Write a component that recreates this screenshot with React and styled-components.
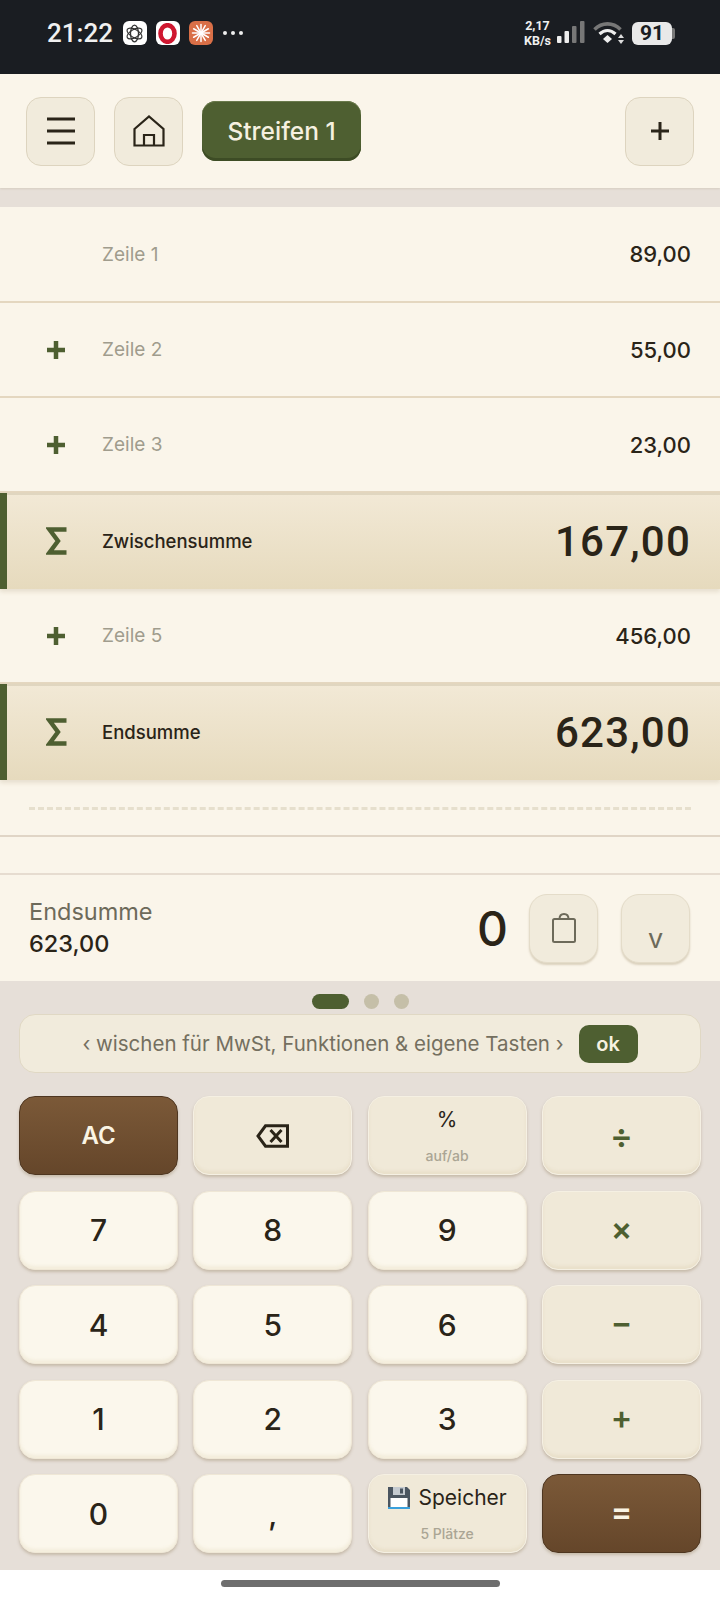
import React from 'react';
import styled, { createGlobalStyle } from 'styled-components';

const GlobalStyle = createGlobalStyle`
  html, body { margin: 0; padding: 0; background: #fff; }
  body { font-family: 'Inter', 'Liberation Sans', sans-serif; }
  * { box-sizing: border-box; }
`;

const Page = styled.div`
  width: 720px;
  height: 1600px;
  display: flex;
  flex-direction: column;
  overflow: hidden;
  background: #fff;
`;

/* status bar */
const StatusBar = styled.div`
  height: 74px;
  flex: none;
  background: #1a1d22;
  display: flex;
  align-items: center;
  padding: 0 45px 8px 47px;
  color: #f0f0f0;
  font-family: 'Roboto', sans-serif;
`;
const Time = styled.span`
  font-size: 26px;
  font-weight: 500;
  margin-right: 10px;
`;
const AppIcon = styled.span`
  width: 24px;
  height: 24px;
  border-radius: 6px;
  background: ${(p) => p.$bg};
  display: flex;
  align-items: center;
  justify-content: center;
  margin-right: 9px;
`;
const MoreDots = styled.span`
  display: flex;
  gap: 4px;
  margin-left: 1px;
  i { width: 4px; height: 4px; border-radius: 50%; background: #eee; }
`;
const StatusRight = styled.div`
  margin-left: auto;
  display: flex;
  align-items: center;
`;
const Speed = styled.span`
  font-size: 12.5px;
  font-weight: 700;
  line-height: 15px;
  text-align: center;
  margin-right: 6px;
`;
const Battery = styled.span`
  width: 40px;
  height: 23px;
  border-radius: 6px;
  background: #e9e9e9;
  color: #1a1d22;
  font-size: 21px;
  font-weight: 700;
  line-height: 23px;
  text-align: center;
  margin-left: 7px;
`;
const BatteryCap = styled.span`
  width: 3px;
  height: 11px;
  background: #777;
  border-radius: 0 2px 2px 0;
`;

/* header */
const Header = styled.div`
  height: 114px;
  flex: none;
  background: #faf5ea;
  display: flex;
  align-items: center;
  padding: 0 26px;
  gap: 19px;
  box-shadow: 0 1px 2px rgba(120, 100, 70, 0.15);
  position: relative;
`;
const IconButton = styled.button`
  width: 69px;
  height: 69px;
  padding: 0;
  display: flex;
  align-items: center;
  justify-content: center;
  border: 1.5px solid #ddd4bf;
  border-radius: 15px;
  background: #f1ebdc;
  color: #2a2418;
  margin-left: ${(p) => (p.$push ? 'auto' : '0')};
`;
const TabPill = styled.div`
  width: 159px;
  height: 60px;
  border-radius: 14px;
  background: #4e5f31;
  box-shadow: inset 0 -3px 0 #3d4c25, inset 0 1px 0 #6a7a4c;
  color: #f6f1e0;
  font-size: 24.5px;
  font-weight: 500;
  display: flex;
  align-items: center;
  justify-content: center;
`;

const Gap = styled.div`
  height: 19px;
  flex: none;
  background: #e6dfd8;
`;

/* rows */
const Row = styled.div`
  height: ${(p) => p.$h}px;
  flex: none;
  display: grid;
  grid-template-columns: 102px 1fr auto;
  align-items: center;
  padding-right: 29px;
  background: #faf5ea;
  border-bottom: 2px solid #e4d7c0;
`;
const SumRow = styled(Row)`
  background: linear-gradient(180deg, #f2e9d6 0%, #e6dabd 100%);
  border-bottom: none;
  box-shadow: inset 7px 0 0 #4e5f31, inset 0 2px 0 #e0d6c0, 0 3px 4px rgba(150, 130, 90, 0.18);
  position: relative;
`;
const Sign = styled.span`
  justify-self: center;
  margin-left: 10px;
  color: #4e5f31;
  display: flex;
`;
const Label = styled.span`
  font-size: ${(p) => (p.$sum ? 18.5 : 19)}px;
  color: ${(p) => (p.$sum ? '#2a2418' : '#a09c8d')};
  font-weight: ${(p) => (p.$sum ? 500 : 400)};
`;
const Value = styled.span`
  font-family: ${(p) => (p.$sum ? "'Roboto', sans-serif" : 'inherit')};
  font-size: ${(p) => (p.$sum ? 42 : 22)}px;
  font-weight: 500;
  color: #2a2418;
  letter-spacing: ${(p) => (p.$sum ? '1.2px' : '0')};
`;
const DashedRow = styled.div`
  height: 57px;
  flex: none;
  background: #faf5ea;
  border-bottom: 2px solid #e0d5c6;
  padding: 27px 29px 0;
`;
const DashedLine = styled.div`
  border-top: 3px dashed #e6dfcd;
`;
const BlankRow = styled.div`
  height: 38px;
  flex: none;
  background: #faf5ea;
  border-bottom: 2px solid #e6dcd0;
`;

/* display */
const Display = styled.div`
  height: 106px;
  flex: none;
  background: #faf5ea;
  display: flex;
  align-items: center;
  padding: 0 30px 0 29px;
`;
const DisplayInfo = styled.div`
  display: flex;
  flex-direction: column;
  gap: 3px;
  margin-right: auto;
  padding-bottom: 2px;
`;
const DisplayName = styled.span`
  font-size: 23.5px;
  color: #6d6a5a;
`;
const DisplayValue = styled.span`
  font-size: 23.5px;
  font-weight: 500;
  color: #2a2418;
`;
const Current = styled.span`
  font-size: 48px;
  font-weight: 500;
  color: #2a2418;
  margin-right: 21px;
`;
const RoundButton = styled.button`
  width: 69px;
  height: 69px;
  padding: 0 0 ${(p) => (p.$low ? '7px' : '0')};
  display: flex;
  align-items: ${(p) => (p.$low ? 'flex-end' : 'center')};
  justify-content: center;
  border: 1.5px solid #e4dcc9;
  border-radius: 18px;
  background: #f1ebdc;
  box-shadow: 0 2px 2px rgba(150, 130, 90, 0.3);
  color: #6d6a5a;
  font: 400 27px 'Inter', sans-serif;
  margin-left: ${(p) => (p.$wide ? '23px' : '0')};
`;

/* keypad */
const Keypad = styled.div`
  height: 589px;
  flex: none;
  background: #e6dfd8;
  padding: 13px 19px 0;
`;
const Dots = styled.div`
  display: flex;
  justify-content: center;
  align-items: center;
  gap: 15px;
  height: 14px;
  margin-bottom: 6px;
`;
const Dot = styled.span`
  width: ${(p) => (p.$active ? 37 : 15)}px;
  height: 15px;
  border-radius: 8px;
  background: ${(p) => (p.$active ? '#4e5f31' : '#c5bfa8')};
`;
const Hint = styled.div`
  height: 59px;
  display: flex;
  align-items: center;
  justify-content: center;
  gap: 15px;
  border: 1.5px solid #e0d8c4;
  border-radius: 16px;
  background: #f1ebdc;
  color: #746f5f;
  font-size: 20.5px;
  margin-bottom: 23px;
`;
const OkBadge = styled.span`
  width: 59px;
  height: 38px;
  display: flex;
  align-items: center;
  justify-content: center;
  border-radius: 10px;
  background: #4e5f31;
  color: #f6f1e0;
  font-size: 20px;
  font-weight: 600;
`;
const KeyGrid = styled.div`
  display: grid;
  grid-template-columns: repeat(4, 159px);
  grid-auto-rows: 79px;
  column-gap: 15.3px;
  row-gap: 15.5px;
`;
const keyThemes = {
  num: 'background: #fbf7ec; color: #2a2418; border: 1.5px solid #efe7d6; box-shadow: inset 0 -3px 3px rgba(225, 210, 175, 0.25), 0 2px 3px rgba(140, 120, 85, 0.35);',
  func: 'background: #f0e9d8; color: #2a2418; border: 1.5px solid #f5f0e3; box-shadow: inset 0 -3px 3px rgba(215, 200, 165, 0.25), 0 2px 3px rgba(140, 120, 85, 0.35);',
  op: 'background: #f0e9d8; color: #4e5f31; font-weight: 600; border: 1.5px solid #f5f0e3; box-shadow: inset 0 -3px 3px rgba(215, 200, 165, 0.25), 0 2px 3px rgba(140, 120, 85, 0.35);',
  main: 'background: linear-gradient(180deg, #7b5938 0%, #65462a 100%); color: #faf4e4; font-weight: 600; border: 1.5px solid #4e3620; box-shadow: 0 2px 3px rgba(140, 120, 85, 0.35);',
};
const Key = styled.button`
  padding: 0 0 ${(p) => (p.$lift ? '4px' : '0')};
  display: flex;
  flex-direction: column;
  align-items: center;
  justify-content: center;
  border-radius: 16px;
  font-family: 'Inter', sans-serif;
  font-size: ${(p) => p.$size || 30}px;
  font-weight: 500;
  ${(p) => keyThemes[p.$kind || 'num']}
`;
const KeyTop = styled.span`
  display: flex;
  align-items: center;
  gap: 7px;
  font-size: 21px;
  font-weight: 400;
  color: #2a2418;
`;
const KeySub = styled.span`
  font-size: 14px;
  font-weight: 500;
  color: #aaa594;
  margin-top: 15px;
`;

/* nav bar */
const NavBar = styled.div`
  flex: 1;
  background: #fff;
  display: flex;
  justify-content: center;
  padding-top: 10px;
`;
const NavHandle = styled.div`
  width: 279px;
  height: 7px;
  border-radius: 4px;
  background: #6e6e6e;
`;

const PlusIcon = ({ size = 18, weight = 3 }) => (
  <svg width={size} height={size} viewBox="0 0 18 18">
    <path d="M9 0v18M0 9h18" stroke="currentColor" strokeWidth={weight} fill="none" />
  </svg>
);

const SigmaIcon = () => (
  <svg width="21" height="28" viewBox="0 0 21 28">
    <path d="M20.500 2.500H3.500l8.500 11.500-8.500 11.500h17" stroke="currentColor" strokeWidth="4.400" fill="none" />
  </svg>
);

const MenuIcon = () => (
  <svg width="28" height="28" viewBox="0 0 28 28">
    <path d="M0 2h28M0 14h28M0 26h28" stroke="currentColor" strokeWidth="3" />
  </svg>
);

const HomeIcon = () => (
  <svg width="32" height="32" viewBox="0 0 32 32" fill="none">
    <path d="M1.500 14L16 1.500 30.500 14v16.500H1.500zM11 30.500V20h10v10.500" stroke="currentColor" strokeWidth="2.200" />
  </svg>
);

const BagIcon = () => (
  <svg width="24" height="30" viewBox="0 0 24 30" fill="none">
    <rect x="1" y="6" width="22" height="23" rx="1.500" stroke="currentColor" strokeWidth="2" />
    <path d="M7.500 6C7.500 2.800 9.300 1 12 1s4.500 1.800 4.500 5" stroke="currentColor" strokeWidth="2" />
  </svg>
);

const BackspaceIcon = () => (
  <svg width="33" height="24" viewBox="0 0 33 24" fill="none">
    <path d="M31.500 1.800H9.500L2 12l7.500 10.200h22zM14.500 6l11 12M25.500 6l-11 12" stroke="currentColor" strokeWidth="3" />
  </svg>
);

const FloppyIcon = () => (
  <svg width="24" height="24" viewBox="0 0 24 24">
    <path d="M1 1h19l3 3v19H1z" fill="#4a5560" />
    <rect x="6" y="1" width="12" height="8" fill="#c4cad0" />
    <rect x="13" y="2.500" width="3" height="5" fill="#4a5560" />
    <rect x="3.500" y="12" width="17" height="9" fill="#fff" />
    <rect x="1" y="21" width="22" height="2" fill="#3aa0dc" />
  </svg>
);

const OpenAiIcon = () => (
  <svg width="19" height="19" viewBox="0 0 24 24" fill="none" stroke="#333" strokeWidth="1.500">
    <ellipse cx="12" cy="12" rx="5" ry="10.500" />
    <ellipse cx="12" cy="12" rx="5" ry="10.500" transform="rotate(60 12 12)" />
    <ellipse cx="12" cy="12" rx="5" ry="10.500" transform="rotate(120 12 12)" />
  </svg>
);

const OperaIcon = () => (
  <svg width="21" height="21" viewBox="0 0 21 21" fill="none">
    <ellipse cx="10.500" cy="10.500" rx="7" ry="8.300" stroke="#cf1730" strokeWidth="4.600" />
  </svg>
);

const BurstIcon = () => (
  <svg width="20" height="20" viewBox="0 0 20 20" stroke="#fff" strokeWidth="1.500" strokeLinecap="round">
    {[0, 30, 60, 90, 120, 150, 180, 210, 240, 270, 300, 330].map((a) => (
      <path key={a} d="M10 10V1.500" transform={`rotate(${a} 10 10)`} />
    ))}
  </svg>
);

const SignalIcon = () => (
  <svg width="28" height="24" viewBox="0 0 28 24">
    <rect x="0" y="15" width="4.500" height="7" rx="1" fill="#eee" />
    <rect x="7.500" y="10" width="4.500" height="12" rx="1" fill="#eee" />
    <rect x="15" y="5" width="4.500" height="17" rx="1" fill="#777" />
    <rect x="23" y="0" width="4.500" height="22" rx="1" fill="#777" />
  </svg>
);

const WifiIcon = () => (
  <svg width="32" height="24" viewBox="0 0 32 24" fill="none" style={{ marginLeft: 8 }}>
    <path d="M1.500 8.500C9 1 20 1 27.500 8.500" stroke="#777" strokeWidth="3.600" />
    <path d="M6.500 13C11.500 8.500 17.500 8.500 22.500 13" stroke="#eee" strokeWidth="3.200" />
    <path d="M10 18l4.500-4 4.500 4-4.500 4z" fill="#eee" />
    <path d="M28 13l3 4h-6zM28 23l3-4h-6z" fill="#ddd" />
  </svg>
);

const lines = [
  { type: 'line', h: 96, label: 'Zeile 1', value: '89,00' },
  { type: 'line', h: 95, sign: true, label: 'Zeile 2', value: '55,00' },
  { type: 'line', h: 95, sign: true, label: 'Zeile 3', value: '23,00' },
  { type: 'sum', h: 96, label: 'Zwischensumme', value: '167,00' },
  { type: 'line', h: 95, sign: true, label: 'Zeile 5', value: '456,00' },
  { type: 'sum', h: 96, label: 'Endsumme', value: '623,00' },
];

const keys = [
  { text: 'AC', kind: 'main', size: 24 },
  { icon: <BackspaceIcon />, kind: 'func' },
  { top: '%', sub: 'auf/ab', kind: 'func' },
  { text: '÷', kind: 'op', size: 34 },
  { text: '7' }, { text: '8' }, { text: '9' },
  { text: '×', kind: 'op', size: 32, lift: true },
  { text: '4' }, { text: '5' }, { text: '6' },
  { text: '−', kind: 'op', size: 32, lift: true },
  { text: '1' }, { text: '2' }, { text: '3' },
  { text: '+', kind: 'op', size: 32, lift: true },
  { text: '0' }, { text: ',' },
  { top: 'Speicher', floppy: true, sub: '5 Plätze', kind: 'func' },
  { text: '=', kind: 'main', size: 32, lift: true },
];

const App = () => (
  <Page>
    <GlobalStyle />
    <StatusBar>
      <Time>21:22</Time>
      <AppIcon $bg="#fff"><OpenAiIcon /></AppIcon>
      <AppIcon $bg="#fff"><OperaIcon /></AppIcon>
      <AppIcon $bg="#d96f47"><BurstIcon /></AppIcon>
      <MoreDots><i /><i /><i /></MoreDots>
      <StatusRight>
        <Speed>2,17<br />KB/s</Speed>
        <SignalIcon />
        <WifiIcon />
        <Battery>91</Battery>
        <BatteryCap />
      </StatusRight>
    </StatusBar>

    <Header>
      <IconButton><MenuIcon /></IconButton>
      <IconButton><HomeIcon /></IconButton>
      <TabPill>Streifen 1</TabPill>
      <IconButton $push><PlusIcon /></IconButton>
    </Header>
    <Gap />

    {lines.map((line) => {
      const RowType = line.type === 'sum' ? SumRow : Row;
      const isSum = line.type === 'sum';
      return (
        <RowType key={line.label} $h={line.h}>
          <Sign>
            {isSum && <SigmaIcon />}
            {line.sign && <PlusIcon weight={4.500} />}
          </Sign>
          <Label $sum={isSum}>{line.label}</Label>
          <Value $sum={isSum}>{line.value}</Value>
        </RowType>
      );
    })}
    <DashedRow><DashedLine /></DashedRow>
    <BlankRow />

    <Display>
      <DisplayInfo>
        <DisplayName>Endsumme</DisplayName>
        <DisplayValue>623,00</DisplayValue>
      </DisplayInfo>
      <Current>0</Current>
      <RoundButton><BagIcon /></RoundButton>
      <RoundButton $low $wide>v</RoundButton>
    </Display>

    <Keypad>
      <Dots>
        <Dot $active />
        <Dot />
        <Dot />
      </Dots>
      <Hint>
        <span>‹ wischen für MwSt, Funktionen &amp; eigene Tasten ›</span>
        <OkBadge>ok</OkBadge>
      </Hint>
      <KeyGrid>
        {keys.map((key, i) => (
          <Key key={i} $kind={key.kind} $size={key.size} $lift={key.lift}>
            {key.text}
            {key.icon}
            {key.top && (
              <KeyTop>
                {key.floppy && <FloppyIcon />}
                {key.top}
              </KeyTop>
            )}
            {key.sub && <KeySub>{key.sub}</KeySub>}
          </Key>
        ))}
      </KeyGrid>
    </Keypad>

    <NavBar><NavHandle /></NavBar>
  </Page>
);

export default App;
